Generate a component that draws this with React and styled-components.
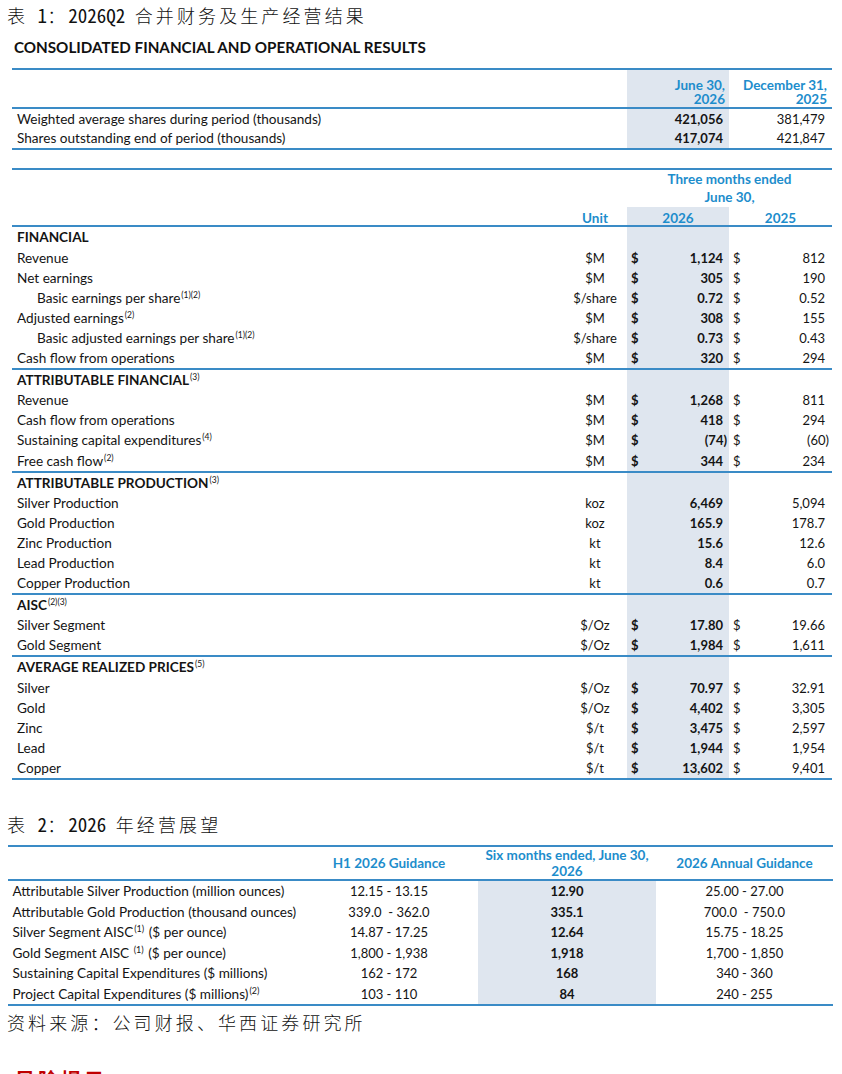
import React from "react";
import styled, { createGlobalStyle } from "styled-components";

const Global = createGlobalStyle`
  html, body { margin: 0; padding: 0; background: #ffffff; }
  body { font-family: Lato, "Open Sans", sans-serif; color: #141414; }
`;

const LINE = "#3a8bc6";
const HEAD = "#1d8dcc";
const SHADE = "#dfe6ef";

const Page = styled.div`
  width: 842px;
  display: flex;
  flex-direction: column;
  padding-bottom: 40px;
`;

const Caption = styled.div`
  font-family: "Noto Sans CJK SC", sans-serif;
  font-weight: 300;
  font-size: 18px;
  line-height: 22px;
  height: 22px;
  letter-spacing: 3.1px;
  color: #111;
  margin: ${(p) => p.$mt}px 0 0 7px;
  white-space: pre;
`;

const Latin = styled.span`
  font-family: "Noto Sans Mono CJK SC", "Liberation Mono", monospace;
  font-weight: 300;
  font-size: 19px;
  line-height: 1;
  letter-spacing: 0;
`;

const ReportTitle = styled.div`
  font-family: Lato, sans-serif;
  font-weight: 700;
  font-size: 15.2px;
  line-height: 20px;
  margin: 10.7px 0 0 14px;
  color: #111;
`;

/* ---------- Table 1a : shares ---------- */
const SharesTable = styled.div`
  margin: 11px 0 0 12px;
  width: 820px;
  border-top: 2px solid ${LINE};
  border-bottom: 2px solid ${LINE};
`;

const SharesRow = styled.div`
  display: grid;
  grid-template-columns: 1fr 102px 103px;
  height: ${(p) => p.$h}px;
  border-bottom: ${(p) => (p.$line ? `2px solid ${LINE}` : "none")};
  font-size: 13px;
`;

const Label = styled.div`
  padding-left: ${(p) => (p.$indent ? 25 : 5)}px;
  font-weight: ${(p) => (p.$bold ? 700 : 400)};
  font-size: 13.6px;
  line-height: ${(p) => p.$lh || 20}px;
  white-space: nowrap;
`;

const HeadCell = styled.div`
  color: ${HEAD};
  font-weight: 700;
  font-size: 13.5px;
  line-height: 14px;
  text-align: right;
  padding: ${(p) => p.$pad || "0"};
  background: ${(p) => (p.$shade ? SHADE : "transparent")};
  display: flex;
  flex-direction: column;
  justify-content: flex-end;
  align-items: flex-end;
  white-space: pre;
`;

const NumCell = styled.div`
  background: ${(p) => (p.$shade ? SHADE : "transparent")};
  font-weight: ${(p) => (p.$bold ? 700 : 400)};
  text-align: right;
  padding-right: ${(p) => p.$pr}px;
  line-height: ${(p) => p.$lh || 20}px;
`;

/* ---------- Table 1b : results ---------- */
const ResultsTable = styled.div`
  margin: 18px 0 0 12px;
  width: 820px;
  border-top: 2px solid ${LINE};
  font-size: 13px;
`;

const ResultsHead = styled.div`
  display: grid;
  grid-template-columns: 1fr 64px 102px 103px;
  grid-template-rows: 18.6px 18.6px 18.6px;
  border-bottom: 2px solid ${LINE};
`;

const Spanner = styled.div`
  grid-column: 3 / 5;
  grid-row: ${(p) => p.$row};
  color: ${HEAD};
  font-weight: 700;
  font-size: 13.5px;
  text-align: center;
  line-height: 18.6px;
`;

const HeadLabel = styled.div`
  grid-row: 3;
  grid-column: ${(p) => p.$col};
  color: ${HEAD};
  font-weight: 700;
  font-size: 13.5px;
  text-align: center;
  line-height: 16px;
  padding-top: 3px;
  background: ${(p) => (p.$shade ? SHADE : "transparent")};
`;

const Section = styled.div`
  border-bottom: 2px solid ${LINE};
`;

const Row = styled.div`
  display: grid;
  grid-template-columns: 1fr 64px 102px 103px;
  height: 20.1px;
`;

const Unit = styled.div`
  text-align: center;
  line-height: 20px;
  white-space: nowrap;
`;

const Money = styled.div`
  display: flex;
  justify-content: space-between;
  align-items: center;
  background: ${(p) => (p.$shade ? SHADE : "transparent")};
  font-weight: ${(p) => (p.$bold ? 700 : 400)};
  padding: 0 ${(p) => p.$pr}px 0 4px;
  line-height: 20px;
`;

const Sup = styled.sup`
  font-size: 8.5px;
  font-weight: 400;
  line-height: 0;
  vertical-align: 0;
  position: relative;
  top: -5px;
  margin-left: 1px;
`;

/* ---------- Table 2 : guidance ---------- */
const GuidanceTable = styled.div`
  margin: 10px 0 0 8px;
  width: 825px;
  border-top: 2px solid ${LINE};
  border-bottom: 2px solid ${LINE};
  font-size: 13px;
`;

const GRow = styled.div`
  display: grid;
  grid-template-columns: 292px 178px 178px 1fr;
  height: ${(p) => p.$h}px;
  border-bottom: ${(p) => (p.$line ? `2px solid ${LINE}` : "none")};
`;

const GHead = styled.div`
  color: ${HEAD};
  font-weight: 700;
  font-size: 13.5px;
  text-align: center;
  line-height: 16px;
  display: flex;
  flex-direction: column;
  justify-content: center;
`;

const GLabel = styled.div`
  padding-left: 4.5px;
  font-size: 13.6px;
  line-height: 20.5px;
  white-space: nowrap;
`;

const GCell = styled.div`
  text-align: center;
  line-height: 20.5px;
  white-space: pre;
  font-weight: ${(p) => (p.$bold ? 700 : 400)};
  background: ${(p) => (p.$shade ? SHADE : "transparent")};
`;

const GSup = styled.sup`
  font-size: 9px;
  line-height: 0;
  vertical-align: 0;
  position: relative;
  top: -5px;
  margin: 0 1px;
`;

const RiskHeading = styled.div`
  font-family: "Noto Sans CJK SC", sans-serif;
  font-weight: 700;
  font-size: 20px;
  line-height: 28px;
  letter-spacing: 3px;
  color: #c00000;
  margin: 33px 0 0 15px;
`;

const sections = [
  {
    head: "FINANCIAL",
    rows: [
      ["Revenue", "", "$M", "1,124", "812", true],
      ["Net earnings", "", "$M", "305", "190", true],
      ["Basic earnings per share", "(1)(2)", "$/share", "0.72", "0.52", true, true],
      ["Adjusted earnings", "(2)", "$M", "308", "155", true],
      ["Basic adjusted earnings per share", "(1)(2)", "$/share", "0.73", "0.43", true, true],
      ["Cash flow from operations", "", "$M", "320", "294", true],
    ],
  },
  {
    head: "ATTRIBUTABLE FINANCIAL",
    sup: "(3)",
    rows: [
      ["Revenue", "", "$M", "1,268", "811", true],
      ["Cash flow from operations", "", "$M", "418", "294", true],
      ["Sustaining capital expenditures", "(4)", "$M", "(74)", "(60)", true],
      ["Free cash flow", "(2)", "$M", "344", "234", true],
    ],
  },
  {
    head: "ATTRIBUTABLE PRODUCTION",
    sup: "(3)",
    rows: [
      ["Silver Production", "", "koz", "6,469", "5,094", false],
      ["Gold Production", "", "koz", "165.9", "178.7", false],
      ["Zinc Production", "", "kt", "15.6", "12.6", false],
      ["Lead Production", "", "kt", "8.4", "6.0", false],
      ["Copper Production", "", "kt", "0.6", "0.7", false],
    ],
  },
  {
    head: "AISC",
    sup: "(2)(3)",
    rows: [
      ["Silver Segment", "", "$/Oz", "17.80", "19.66", true],
      ["Gold Segment", "", "$/Oz", "1,984", "1,611", true],
    ],
  },
  {
    head: "AVERAGE REALIZED PRICES",
    sup: "(5)",
    rows: [
      ["Silver", "", "$/Oz", "70.97", "32.91", true],
      ["Gold", "", "$/Oz", "4,402", "3,305", true],
      ["Zinc", "", "$/t", "3,475", "2,597", true],
      ["Lead", "", "$/t", "1,944", "1,954", true],
      ["Copper", "", "$/t", "13,602", "9,401", true],
    ],
  },
];

const guidance = [
  { label: "Attributable Silver Production (million ounces)", h1: "12.15 - 13.15", ytd: "12.90", year: "25.00 - 27.00" },
  { label: "Attributable Gold Production (thousand ounces)", h1: "339.0  - 362.0", ytd: "335.1", year: "700.0  - 750.0" },
  { label: "Silver Segment AISC", sup: "(1)", after: " ($ per ounce)", h1: "14.87 - 17.25", ytd: "12.64", year: "15.75 - 18.25" },
  { label: "Gold Segment AISC ", sup: "(1)", after: " ($ per ounce)", h1: "1,800 - 1,938", ytd: "1,918", year: "1,700 - 1,850" },
  { label: "Sustaining Capital Expenditures ($ millions)", h1: "162 - 172", ytd: "168", year: "340 - 360" },
  { label: "Project Capital Expenditures ($ millions)", sup: "(2)", h1: "103 - 110", ytd: "84", year: "240 - 255" },
];

const isNeg = (v) => v.startsWith("(");

export default function App() {
  return (
    <Page>
      <Global />
      <Caption $mt={4}>
        表<Latin> 1</Latin>：<Latin>2026Q2 </Latin>合并财务及生产经营结果
      </Caption>
      <ReportTitle>CONSOLIDATED FINANCIAL AND OPERATIONAL RESULTS</ReportTitle>

      <SharesTable>
        <SharesRow $h={37} $line>
          <div />
          <HeadCell $shade $pad="0 4px 1px 0">{"June 30,\n2026"}</HeadCell>
          <HeadCell $pad="0 5px 1px 0">{"December 31,\n2025"}</HeadCell>
        </SharesRow>
        <SharesRow $h={19.5}>
          <Label $lh={20}>Weighted average shares during period (thousands)</Label>
          <NumCell $shade $bold $pr={6} $lh={20}>421,056</NumCell>
          <NumCell $pr={7} $lh={20}>381,479</NumCell>
        </SharesRow>
        <SharesRow $h={19.5}>
          <Label $lh={20}>Shares outstanding end of period (thousands)</Label>
          <NumCell $shade $bold $pr={6} $lh={20}>417,074</NumCell>
          <NumCell $pr={7} $lh={20}>421,847</NumCell>
        </SharesRow>
      </SharesTable>

      <ResultsTable>
        <ResultsHead>
          <Spanner $row={1}>Three months ended</Spanner>
          <Spanner $row={2}>June 30,</Spanner>
          <HeadLabel $col={2}>Unit</HeadLabel>
          <HeadLabel $col={3} $shade>2026</HeadLabel>
          <HeadLabel $col={4}>2025</HeadLabel>
        </ResultsHead>
        {sections.map((s) => (
          <Section key={s.head}>
            <Row>
              <Label $bold>
                {s.head}
                {s.sup && <Sup>{s.sup}</Sup>}
              </Label>
              <div />
              <Money $shade />
              <div />
            </Row>
            {s.rows.map(([label, sup, unit, cur, prev, dollar, indent]) => (
              <Row key={label}>
                <Label $indent={indent}>
                  {label}
                  {sup && <Sup>{sup}</Sup>}
                </Label>
                <Unit>{unit}</Unit>
                <Money $shade $bold $pr={isNeg(cur) ? 2 : 6}>
                  <span>{dollar ? "$" : ""}</span>
                  <span>{cur}</span>
                </Money>
                <Money $pr={isNeg(prev) ? 3 : 7}>
                  <span>{dollar ? "$" : ""}</span>
                  <span>{prev}</span>
                </Money>
              </Row>
            ))}
          </Section>
        ))}
      </ResultsTable>

      <Caption $mt={33}>
        表<Latin> 2</Latin>：<Latin>2026 </Latin>年经营展望
      </Caption>

      <GuidanceTable>
        <GRow $h={32} $line>
          <div />
          <GHead>H1 2026 Guidance</GHead>
          <GHead>
            <span>Six months ended, June 30,</span>
            <span>2026</span>
          </GHead>
          <GHead>2026 Annual Guidance</GHead>
        </GRow>
        {guidance.map((g) => (
          <GRow $h={20.5} key={g.label}>
            <GLabel>
              {g.label}
              {g.sup && <GSup>{g.sup}</GSup>}
              {g.after}
            </GLabel>
            <GCell>{g.h1}</GCell>
            <GCell $shade $bold>{g.ytd}</GCell>
            <GCell>{g.year}</GCell>
          </GRow>
        ))}
      </GuidanceTable>

      <Caption $mt={4.5}>资料来源：公司财报、华西证券研究所</Caption>
      <RiskHeading>风险提示</RiskHeading>
    </Page>
  );
}
